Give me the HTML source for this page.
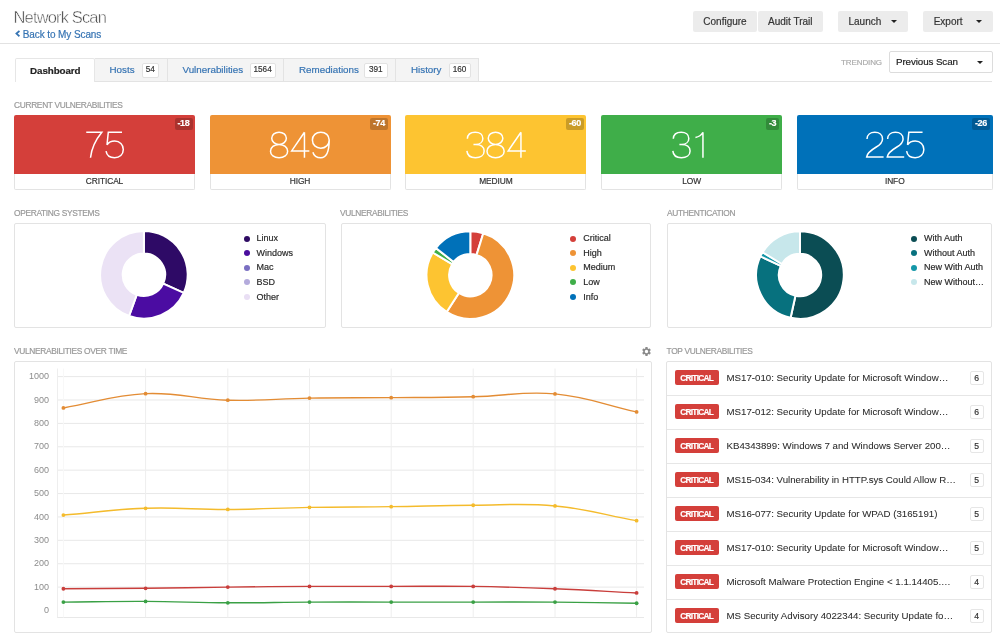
<!DOCTYPE html><html><head><meta charset="utf-8"><style>
*{box-sizing:border-box;margin:0;padding:0}
html,body{width:1000px;height:639px;overflow:hidden;background:#fff;will-change:transform;-webkit-text-stroke-width:0.18px;font-family:"Liberation Sans", sans-serif;}
.a{position:absolute;white-space:nowrap}
.btn{position:absolute;background:#ececec;color:#333;font-size:10px;line-height:22px;height:20.5px;border-radius:2px}
.caret{position:absolute;width:0;height:0;border-left:3.5px solid transparent;border-right:3.5px solid transparent;border-top:3.5px solid #222}
.tab{position:absolute;top:58px;height:23px;background:#f4f4f4;border:1px solid #e3e3e3;border-bottom:none;}
.tl{position:absolute;top:6px;font-size:9.8px;color:#3573b3;line-height:10px}
.cnt{position:absolute;top:4px;height:14.5px;background:#fff;border:1px solid #e2e2e2;border-radius:2px;font-size:8.2px;color:#333;line-height:12px;text-align:center}
.lbl{position:absolute;font-size:8.4px;color:#999;line-height:9px;white-space:nowrap;letter-spacing:-0.33px}
.card{position:absolute;top:115px;height:74.5px;border-radius:2px;background:#fff;}
.cb{position:absolute;left:0;right:0;top:58.5px;bottom:0;border:1px solid #e3e3e3;border-top:none;border-radius:0 0 2px 2px}
.cc{position:absolute;left:0;right:0;top:0;height:58.5px;border-radius:2px 2px 0 0}
.num{position:absolute;left:0;right:0;top:12px;text-align:center;color:#fff;font-size:43px;line-height:36px;letter-spacing:-2.4px;text-indent:-2.4px;font-weight:normal;-webkit-text-stroke:1.35px var(--bg)}
.dl{position:absolute;top:3px;right:2.5px;height:11.5px;font-size:9px;font-weight:bold;color:#fff;line-height:11.5px;padding:0 3px 0 2.5px;background:rgba(0,0,0,0.2);border-radius:2px;letter-spacing:-0.3px}
.cl{position:absolute;left:0;right:0;top:62px;text-align:center;font-size:8.4px;color:#333;line-height:9px;letter-spacing:-0.1px}
.panel{position:absolute;border:1px solid #e3e3e3;border-radius:2px;background:#fff}
.lg{position:absolute;font-size:9px;color:#2a2a2a;line-height:10px;white-space:nowrap}
.dot{position:absolute;width:6px;height:6px;border-radius:50%}
.row{position:absolute;left:0;right:0;height:34px;border-bottom:1px solid #e6e6e6}
.crit{position:absolute;left:7.7px;top:8.9px;width:44px;height:14.5px;background:#d43f3a;border-radius:2px;color:#fff;font-weight:bold;font-size:8.3px;letter-spacing:-0.7px;line-height:16px;text-align:center}
.rt{position:absolute;left:59.5px;top:11.4px;font-size:9.7px;color:#2a2a2a;-webkit-text-stroke-width:0.05px;line-height:10px}
.rc{position:absolute;left:303px;top:9px;width:13.5px;height:14px;border:1px solid #e6e6e6;border-radius:2px;font-size:8.6px;color:#333;line-height:12px;text-align:center}
</style></head><body>

<div class="a" style="left:13.5px;top:7px;font-size:16.5px;line-height:20px;color:#3c3c3c;letter-spacing:-0.85px;-webkit-text-stroke:0.5px #fff">Network Scan</div>
<svg class="a" style="left:0;top:0" width="30" height="45"><polyline points="18.8,31.5 16.4,33.6 18.8,35.7" fill="none" stroke="#3573b3" stroke-width="1.7" stroke-linecap="square"/></svg><div class="a" style="left:22.8px;top:28.8px;font-size:10px;line-height:11px;color:#3573b3;letter-spacing:-0.1px">Back to My Scans</div>
<div class="a" style="left:0;top:43px;width:1000px;height:1px;background:#e2e2e2"></div>
<div class="btn" style="left:693px;top:11.3px;width:64px;text-align:center">Configure</div>
<div class="btn" style="left:758px;top:11.3px;width:64.5px;text-align:center">Audit Trail</div>
<div class="btn" style="left:838px;top:11.3px;width:70px;padding-left:10.5px">Launch</div><div class="caret" style="left:891px;top:19.5px"></div>
<div class="btn" style="left:923px;top:11.3px;width:69.5px;padding-left:10.7px">Export</div><div class="caret" style="left:976px;top:19.5px"></div>
<div class="a" style="left:94px;top:81px;width:898px;height:1px;background:#e3e3e3"></div>
<div class="tab" style="left:14.5px;width:80.5px;background:#fff;height:24px;border-color:#e6e6e6;border-radius:2px 2px 0 0"><div class="tl" style="left:14.6px;color:#222;font-weight:bold;top:7px;font-size:9.8px;letter-spacing:-0.1px">Dashboard</div></div>
<div class="tab" style="left:94.5px;width:73.0px;border-left:none"><div class="tl" style="left:15px">Hosts</div><div class="cnt" style="right:7.5px;width:17.3px">54</div></div>
<div class="tab" style="left:167.5px;width:116.5px;border-left:none"><div class="tl" style="left:15px">Vulnerabilities</div><div class="cnt" style="right:7.5px;width:25.8px">1564</div></div>
<div class="tab" style="left:284.0px;width:112.0px;border-left:none"><div class="tl" style="left:15px">Remediations</div><div class="cnt" style="right:7.5px;width:23.3px">391</div></div>
<div class="tab" style="left:396.0px;width:83.0px;border-left:none"><div class="tl" style="left:15px">History</div><div class="cnt" style="right:7.5px;width:21.8px">160</div></div>
<div class="lbl" style="left:841px;top:57.5px;font-size:8px;letter-spacing:-0.1px;color:#aaa">TRENDING</div>
<div class="a" style="left:889px;top:51px;width:103.5px;height:22px;border:1px solid #dcdcdc;border-radius:2px;background:#fff"><div class="a" style="left:6px;top:4.3px;font-size:9.8px;line-height:11px;color:#222;letter-spacing:-0.1px">Previous Scan</div><div class="caret" style="left:87px;top:9px"></div></div>
<div class="lbl" style="left:14px;top:100.5px">CURRENT VULNERABILITIES</div>
<div class="card" style="left:14.0px;width:181.0px"><div class="cc" style="background:#d43f3a;--bg:#d43f3a"><div class="dl">-18</div></div><div class="cb"></div><div class="cl">CRITICAL</div></div>
<div class="card" style="left:209.5px;width:181.0px"><div class="cc" style="background:#ee9336;--bg:#ee9336"><div class="dl">-74</div></div><div class="cb"></div><div class="cl">HIGH</div></div>
<div class="card" style="left:405.3px;width:181.2px"><div class="cc" style="background:#fdc431;--bg:#fdc431"><div class="dl">-60</div></div><div class="cb"></div><div class="cl">MEDIUM</div></div>
<div class="card" style="left:601.3px;width:180.5px"><div class="cc" style="background:#3fae49;--bg:#3fae49"><div class="dl">-3</div></div><div class="cb"></div><div class="cl">LOW</div></div>
<div class="card" style="left:797.0px;width:195.5px"><div class="cc" style="background:#0071b9;--bg:#0071b9"><div class="dl">-26</div></div><div class="cb"></div><div class="cl">INFO</div></div>
<svg class="a" style="left:0;top:0" width="1000" height="639"><g fill="none" stroke="#fff" stroke-width="1.5" stroke-linecap="butt" stroke-linejoin="miter"><path transform="translate(85.60 131.60)" d="M0.65,0.65 H16.2 C11.2,6.8 6.0,15.5 4.9,26.15"/><path transform="translate(105.40 131.60)" d="M16.6,0.65 H2.9 L1.6,13.3 C3.2,10.9 5.9,9.5 9.3,9.5 C14.4,9.5 17.9,13 17.9,17.9 C17.9,22.8 14.2,26.15 9.2,26.15 C4.6,26.15 1.3,23.5 0.65,19.6"/><path transform="translate(269.85 131.60)" d="M9.2,0.65 C13.3,0.65 16.5,3.2 16.5,6.6 C16.5,10 13.3,12.9 9.2,12.9 C5.1,12.9 1.9,10 1.9,6.6 C1.9,3.2 5.1,0.65 9.2,0.65 Z M9.2,12.9 C14.2,12.9 17.8,15.7 17.8,19.6 C17.8,23.5 14.2,26.15 9.2,26.15 C4.2,26.15 0.65,23.5 0.65,19.6 C0.65,15.7 4.2,12.9 9.2,12.9 Z"/><path transform="translate(291.05 131.60)" d="M13.4,0.65 L0.65,19.3 H18.3 M13.4,0.65 V26.15"/><path transform="translate(311.60 131.60)" d="M17.6,8.4 C17.6,13.2 14,16.6 9.2,16.6 C4.4,16.6 0.8,13.2 0.8,8.5 C0.8,3.8 4.4,0.65 9.2,0.65 C14,0.65 17.6,3.8 17.6,8.4 C17.6,19.5 14.8,26.15 9.2,26.15 C5.2,26.15 2.2,24 1.3,20.6"/><path transform="translate(466.25 131.60)" d="M1.1,7.2 C1.3,3 4.6,0.65 9,0.65 C13.4,0.65 16.6,3.1 16.6,6.8 C16.6,10.5 13.6,12.8 9.4,12.8 H7.2 M9.4,12.8 C14.4,12.8 17.9,15.4 17.9,19.5 C17.9,23.6 14.2,26.15 9.2,26.15 C4.4,26.15 1,23.6 0.65,19.3"/><path transform="translate(486.35 131.60)" d="M9.2,0.65 C13.3,0.65 16.5,3.2 16.5,6.6 C16.5,10 13.3,12.9 9.2,12.9 C5.1,12.9 1.9,10 1.9,6.6 C1.9,3.2 5.1,0.65 9.2,0.65 Z M9.2,12.9 C14.2,12.9 17.8,15.7 17.8,19.6 C17.8,23.5 14.2,26.15 9.2,26.15 C4.2,26.15 0.65,23.5 0.65,19.6 C0.65,15.7 4.2,12.9 9.2,12.9 Z"/><path transform="translate(507.55 131.60)" d="M13.4,0.65 L0.65,19.3 H18.3 M13.4,0.65 V26.15"/><path transform="translate(672.20 131.60)" d="M1.1,7.2 C1.3,3 4.6,0.65 9,0.65 C13.4,0.65 16.6,3.1 16.6,6.8 C16.6,10.5 13.6,12.8 9.4,12.8 H7.2 M9.4,12.8 C14.4,12.8 17.9,15.4 17.9,19.5 C17.9,23.6 14.2,26.15 9.2,26.15 C4.4,26.15 1,23.6 0.65,19.3"/><path transform="translate(691.55 131.60)" d="M11.4,0.65 V26.15 M11.4,0.65 C9.8,3.6 7,5.3 3.9,5.8"/><path transform="translate(865.70 131.60)" d="M1.3,7.3 C1.4,3 4.7,0.65 9.1,0.65 C13.6,0.65 16.8,3.3 16.8,7.3 C16.8,10.9 14.5,13 10.6,15.4 C4.9,18.8 1.2,21.4 0.9,25.5 H17.9"/><path transform="translate(886.30 131.60)" d="M1.3,7.3 C1.4,3 4.7,0.65 9.1,0.65 C13.6,0.65 16.8,3.3 16.8,7.3 C16.8,10.9 14.5,13 10.6,15.4 C4.9,18.8 1.2,21.4 0.9,25.5 H17.9"/><path transform="translate(905.95 131.60)" d="M16.6,0.65 H2.9 L1.6,13.3 C3.2,10.9 5.9,9.5 9.3,9.5 C14.4,9.5 17.9,13 17.9,17.9 C17.9,22.8 14.2,26.15 9.2,26.15 C4.6,26.15 1.3,23.5 0.65,19.6"/></g></svg>
<div class="lbl" style="left:14px;top:209px">OPERATING SYSTEMS</div>
<div class="lbl" style="left:340px;top:209px">VULNERABILITIES</div>
<div class="lbl" style="left:667px;top:209px">AUTHENTICATION</div>
<div class="panel" style="left:14.0px;top:223px;width:311.5px;height:105px"></div>
<div class="panel" style="left:340.5px;top:223px;width:310.5px;height:105px"></div>
<div class="panel" style="left:666.5px;top:223px;width:325.8px;height:105px"></div>
<svg class="a" style="left:0;top:0" width="1000" height="639" viewBox="0 0 1000 639"><path d="M143.90 231.00 A43.80 43.80 0 0 1 183.76 292.96 L163.19 283.59 A21.20 21.20 0 0 0 143.90 253.60 Z" fill="#2e0a66" stroke="#fff" stroke-width="2"/><path d="M183.76 292.96 A43.80 43.80 0 0 1 129.06 316.01 L136.72 294.75 A21.20 21.20 0 0 0 163.19 283.59 Z" fill="#4b0ca2" stroke="#fff" stroke-width="2"/><path d="M129.06 316.01 A43.80 43.80 0 0 1 143.90 231.00 L143.90 253.60 A21.20 21.20 0 0 0 136.72 294.75 Z" fill="#ebe2f5" stroke="#fff" stroke-width="2"/><path d="M470.30 231.30 A43.80 43.80 0 0 1 483.30 233.27 L476.59 254.86 A21.20 21.20 0 0 0 470.30 253.90 Z" fill="#d43f3a" stroke="#fff" stroke-width="2"/><path d="M483.30 233.27 A43.80 43.80 0 1 1 446.65 311.96 L458.85 292.94 A21.20 21.20 0 1 0 476.59 254.86 Z" fill="#ee9336" stroke="#fff" stroke-width="2"/><path d="M446.65 311.96 A43.80 43.80 0 0 1 432.79 252.49 L452.14 264.16 A21.20 21.20 0 0 0 458.85 292.94 Z" fill="#fdc431" stroke="#fff" stroke-width="2"/><path d="M432.79 252.49 A43.80 43.80 0 0 1 435.88 248.01 L453.64 261.99 A21.20 21.20 0 0 0 452.14 264.16 Z" fill="#3fae49" stroke="#fff" stroke-width="2"/><path d="M435.88 248.01 A43.80 43.80 0 0 1 470.30 231.30 L470.30 253.90 A21.20 21.20 0 0 0 453.64 261.99 Z" fill="#0071b9" stroke="#fff" stroke-width="2"/><path d="M800.00 231.20 A43.80 43.80 0 1 1 790.59 317.78 L795.45 295.71 A21.20 21.20 0 1 0 800.00 253.80 Z" fill="#0b4d54" stroke="#fff" stroke-width="2"/><path d="M790.59 317.78 A43.80 43.80 0 0 1 760.40 256.28 L780.83 265.94 A21.20 21.20 0 0 0 795.45 295.71 Z" fill="#07717e" stroke="#fff" stroke-width="2"/><path d="M760.40 256.28 A43.80 43.80 0 0 1 762.57 252.25 L781.89 263.99 A21.20 21.20 0 0 0 780.83 265.94 Z" fill="#1497a8" stroke="#fff" stroke-width="2"/><path d="M762.57 252.25 A43.80 43.80 0 0 1 800.00 231.20 L800.00 253.80 A21.20 21.20 0 0 0 781.89 263.99 Z" fill="#c7e7eb" stroke="#fff" stroke-width="2"/></svg>
<div class="dot" style="left:243.7px;top:235.5px;background:#2e0b63"></div>
<div class="lg" style="left:256.6px;top:233.2px">Linux</div>
<div class="dot" style="left:243.7px;top:250.1px;background:#4a0e9e"></div>
<div class="lg" style="left:256.6px;top:247.8px">Windows</div>
<div class="dot" style="left:243.7px;top:264.7px;background:#7a6fc2"></div>
<div class="lg" style="left:256.6px;top:262.4px">Mac</div>
<div class="dot" style="left:243.7px;top:279.3px;background:#b4abdc"></div>
<div class="lg" style="left:256.6px;top:277.0px">BSD</div>
<div class="dot" style="left:243.7px;top:293.9px;background:#e9dff4"></div>
<div class="lg" style="left:256.6px;top:291.6px">Other</div>
<div class="dot" style="left:569.5px;top:235.5px;background:#d43f3a"></div>
<div class="lg" style="left:583.2px;top:233.2px">Critical</div>
<div class="dot" style="left:569.5px;top:250.1px;background:#ee9336"></div>
<div class="lg" style="left:583.2px;top:247.8px">High</div>
<div class="dot" style="left:569.5px;top:264.7px;background:#fdc431"></div>
<div class="lg" style="left:583.2px;top:262.4px">Medium</div>
<div class="dot" style="left:569.5px;top:279.3px;background:#3fae49"></div>
<div class="lg" style="left:583.2px;top:277.0px">Low</div>
<div class="dot" style="left:569.5px;top:293.9px;background:#0071b9"></div>
<div class="lg" style="left:583.2px;top:291.6px">Info</div>
<div class="dot" style="left:910.6px;top:235.5px;background:#0b4d54"></div>
<div class="lg" style="left:924.1px;top:233.2px">With Auth</div>
<div class="dot" style="left:910.6px;top:250.1px;background:#07717e"></div>
<div class="lg" style="left:924.1px;top:247.8px">Without Auth</div>
<div class="dot" style="left:910.6px;top:264.7px;background:#1497a8"></div>
<div class="lg" style="left:924.1px;top:262.4px">New With Auth</div>
<div class="dot" style="left:910.6px;top:279.3px;background:#c7e7eb"></div>
<div class="lg" style="left:924.1px;top:277.0px">New Without…</div>
<div class="lbl" style="left:14px;top:347px">VULNERABILITIES OVER TIME</div>
<div class="panel" style="left:14px;top:361px;width:637.5px;height:271.5px"></div>
<svg class="a" style="left:640.5px;top:345.5px" width="11" height="11" viewBox="0 0 24 24"><path fill="#8a8a8a" d="M19.14 12.94c.04-.3.06-.61.06-.94 0-.32-.02-.64-.07-.94l2.03-1.58a.49.49 0 0 0 .12-.61l-1.92-3.32a.49.49 0 0 0-.59-.22l-2.39.96c-.5-.38-1.03-.7-1.62-.94l-.36-2.54a.484.484 0 0 0-.48-.41h-3.84c-.24 0-.43.17-.47.41l-.36 2.54c-.59.24-1.13.57-1.62.94l-2.39-.96a.48.48 0 0 0-.59.22L2.74 8.87c-.12.21-.08.47.12.61l2.03 1.58c-.05.3-.09.63-.09.94s.02.64.07.94l-2.03 1.58a.49.49 0 0 0-.12.61l1.92 3.32c.12.22.37.29.59.22l2.39-.96c.5.38 1.03.7 1.62.94l.36 2.54c.05.24.24.41.48.41h3.84c.24 0 .44-.17.47-.41l.36-2.54c.59-.24 1.13-.56 1.62-.94l2.39.96c.22.08.47 0 .59-.22l1.92-3.32c.12-.22.07-.47-.12-.61l-2.01-1.58zM12 15.6c-1.98 0-3.6-1.62-3.6-3.6s1.62-3.6 3.6-3.6 3.6 1.62 3.6 3.6-1.62 3.6-3.6 3.6z"/></svg>
<svg class="a" style="left:0;top:0" width="1000" height="639" viewBox="0 0 1000 639"><text x="49" y="613.10" font-size="9" fill="#8c8c8c" text-anchor="end" font-family='"Liberation Sans",sans-serif'>0</text><line x1="57" y1="587.11" x2="644" y2="587.11" stroke="#e8e8e8" stroke-width="1"/><text x="49" y="589.71" font-size="9" fill="#8c8c8c" text-anchor="end" font-family='"Liberation Sans",sans-serif'>100</text><line x1="57" y1="563.72" x2="644" y2="563.72" stroke="#e8e8e8" stroke-width="1"/><text x="49" y="566.32" font-size="9" fill="#8c8c8c" text-anchor="end" font-family='"Liberation Sans",sans-serif'>200</text><line x1="57" y1="540.33" x2="644" y2="540.33" stroke="#e8e8e8" stroke-width="1"/><text x="49" y="542.93" font-size="9" fill="#8c8c8c" text-anchor="end" font-family='"Liberation Sans",sans-serif'>300</text><line x1="57" y1="516.94" x2="644" y2="516.94" stroke="#e8e8e8" stroke-width="1"/><text x="49" y="519.54" font-size="9" fill="#8c8c8c" text-anchor="end" font-family='"Liberation Sans",sans-serif'>400</text><line x1="57" y1="493.55" x2="644" y2="493.55" stroke="#e8e8e8" stroke-width="1"/><text x="49" y="496.15" font-size="9" fill="#8c8c8c" text-anchor="end" font-family='"Liberation Sans",sans-serif'>500</text><line x1="57" y1="470.16" x2="644" y2="470.16" stroke="#e8e8e8" stroke-width="1"/><text x="49" y="472.76" font-size="9" fill="#8c8c8c" text-anchor="end" font-family='"Liberation Sans",sans-serif'>600</text><line x1="57" y1="446.77" x2="644" y2="446.77" stroke="#e8e8e8" stroke-width="1"/><text x="49" y="449.37" font-size="9" fill="#8c8c8c" text-anchor="end" font-family='"Liberation Sans",sans-serif'>700</text><line x1="57" y1="423.38" x2="644" y2="423.38" stroke="#e8e8e8" stroke-width="1"/><text x="49" y="425.98" font-size="9" fill="#8c8c8c" text-anchor="end" font-family='"Liberation Sans",sans-serif'>800</text><line x1="57" y1="399.99" x2="644" y2="399.99" stroke="#e8e8e8" stroke-width="1"/><text x="49" y="402.59" font-size="9" fill="#8c8c8c" text-anchor="end" font-family='"Liberation Sans",sans-serif'>900</text><line x1="57" y1="376.60" x2="644" y2="376.60" stroke="#e8e8e8" stroke-width="1"/><text x="49" y="379.20" font-size="9" fill="#8c8c8c" text-anchor="end" font-family='"Liberation Sans",sans-serif'>1000</text><line x1="57" y1="617.5" x2="644" y2="617.5" stroke="#e8e8e8" stroke-width="1"/><line x1="57.50" y1="368.5" x2="57.50" y2="617.5" stroke="#eeeeee" stroke-width="1"/><line x1="63.40" y1="368.5" x2="63.40" y2="617.5" stroke="#f8f8f8" stroke-width="1"/><line x1="145.60" y1="368.5" x2="145.60" y2="617.5" stroke="#eeeeee" stroke-width="1"/><line x1="227.80" y1="368.5" x2="227.80" y2="617.5" stroke="#eeeeee" stroke-width="1"/><line x1="309.50" y1="368.5" x2="309.50" y2="617.5" stroke="#eeeeee" stroke-width="1"/><line x1="391.20" y1="368.5" x2="391.20" y2="617.5" stroke="#eeeeee" stroke-width="1"/><line x1="473.20" y1="368.5" x2="473.20" y2="617.5" stroke="#eeeeee" stroke-width="1"/><line x1="555.00" y1="368.5" x2="555.00" y2="617.5" stroke="#eeeeee" stroke-width="1"/><line x1="636.60" y1="368.5" x2="636.60" y2="617.5" stroke="#eeeeee" stroke-width="1"/><path d="M63.40 407.94 C96.28 402.24 112.53 395.23 145.60 393.67 C178.29 392.14 194.87 399.33 227.80 400.22 C260.43 401.11 276.81 398.63 309.50 398.12 C342.17 397.60 358.52 397.93 391.20 397.65 C424.00 397.37 440.41 397.46 473.20 396.72 C505.93 395.97 522.66 390.90 555.00 393.91 C588.02 396.98 603.96 404.71 636.60 411.92" fill="none" stroke="#e38c34" stroke-width="1.4"/><circle cx="63.40" cy="407.94" r="1.9" fill="#e38c34"/><circle cx="145.60" cy="393.67" r="1.9" fill="#e38c34"/><circle cx="227.80" cy="400.22" r="1.9" fill="#e38c34"/><circle cx="309.50" cy="398.12" r="1.9" fill="#e38c34"/><circle cx="391.20" cy="397.65" r="1.9" fill="#e38c34"/><circle cx="473.20" cy="396.72" r="1.9" fill="#e38c34"/><circle cx="555.00" cy="393.91" r="1.9" fill="#e38c34"/><circle cx="636.60" cy="411.92" r="1.9" fill="#e38c34"/><path d="M63.40 515.07 C96.28 512.36 112.67 509.41 145.60 508.29 C178.43 507.16 194.92 509.64 227.80 509.46 C260.48 509.27 276.82 507.91 309.50 507.35 C342.18 506.79 358.52 507.07 391.20 506.65 C424.00 506.23 440.40 505.39 473.20 505.25 C505.92 505.10 522.54 502.88 555.00 505.95 C587.90 509.06 603.96 514.79 636.60 520.68" fill="none" stroke="#f4bb2c" stroke-width="1.4"/><circle cx="63.40" cy="515.07" r="1.9" fill="#f4bb2c"/><circle cx="145.60" cy="508.29" r="1.9" fill="#f4bb2c"/><circle cx="227.80" cy="509.46" r="1.9" fill="#f4bb2c"/><circle cx="309.50" cy="507.35" r="1.9" fill="#f4bb2c"/><circle cx="391.20" cy="506.65" r="1.9" fill="#f4bb2c"/><circle cx="473.20" cy="505.25" r="1.9" fill="#f4bb2c"/><circle cx="555.00" cy="505.95" r="1.9" fill="#f4bb2c"/><circle cx="636.60" cy="520.68" r="1.9" fill="#f4bb2c"/><path d="M63.40 588.75 C96.28 588.56 112.72 588.61 145.60 588.28 C178.48 587.95 194.92 587.49 227.80 587.11 C260.48 586.74 276.82 586.55 309.50 586.41 C342.18 586.27 358.52 586.41 391.20 586.41 C424.00 586.41 440.41 585.94 473.20 586.41 C505.93 586.88 522.30 587.44 555.00 588.75 C587.66 590.06 603.96 591.27 636.60 592.96" fill="none" stroke="#c93e3b" stroke-width="1.4"/><circle cx="63.40" cy="588.75" r="1.9" fill="#c93e3b"/><circle cx="145.60" cy="588.28" r="1.9" fill="#c93e3b"/><circle cx="227.80" cy="587.11" r="1.9" fill="#c93e3b"/><circle cx="309.50" cy="586.41" r="1.9" fill="#c93e3b"/><circle cx="391.20" cy="586.41" r="1.9" fill="#c93e3b"/><circle cx="473.20" cy="586.41" r="1.9" fill="#c93e3b"/><circle cx="555.00" cy="588.75" r="1.9" fill="#c93e3b"/><circle cx="636.60" cy="592.96" r="1.9" fill="#c93e3b"/><path d="M63.40 602.08 C96.28 601.80 112.72 601.24 145.60 601.38 C178.48 601.52 194.92 602.64 227.80 602.78 C260.48 602.92 276.82 602.22 309.50 602.08 C342.18 601.94 358.52 602.08 391.20 602.08 C424.00 602.08 440.40 602.08 473.20 602.08 C505.92 602.08 522.28 601.85 555.00 602.08 C587.64 602.31 603.96 602.78 636.60 603.25" fill="none" stroke="#3aa045" stroke-width="1.4"/><circle cx="63.40" cy="602.08" r="1.9" fill="#3aa045"/><circle cx="145.60" cy="601.38" r="1.9" fill="#3aa045"/><circle cx="227.80" cy="602.78" r="1.9" fill="#3aa045"/><circle cx="309.50" cy="602.08" r="1.9" fill="#3aa045"/><circle cx="391.20" cy="602.08" r="1.9" fill="#3aa045"/><circle cx="473.20" cy="602.08" r="1.9" fill="#3aa045"/><circle cx="555.00" cy="602.08" r="1.9" fill="#3aa045"/><circle cx="636.60" cy="603.25" r="1.9" fill="#3aa045"/></svg>
<div class="lbl" style="left:666.5px;top:346.5px">TOP VULNERABILITIES</div>
<div class="panel" style="left:666px;top:360.5px;width:326px;height:272px;overflow:hidden">
<div class="row" style="top:0.0px"><div class="crit">CRITICAL</div><div class="rt">MS17-010: Security Update for Microsoft Window…</div><div class="rc">6</div></div>
<div class="row" style="top:34.0px"><div class="crit">CRITICAL</div><div class="rt">MS17-012: Security Update for Microsoft Window…</div><div class="rc">6</div></div>
<div class="row" style="top:68.0px"><div class="crit">CRITICAL</div><div class="rt">KB4343899: Windows 7 and Windows Server 200…</div><div class="rc">5</div></div>
<div class="row" style="top:102.0px"><div class="crit">CRITICAL</div><div class="rt">MS15-034: Vulnerability in HTTP.sys Could Allow R…</div><div class="rc">5</div></div>
<div class="row" style="top:136.0px"><div class="crit">CRITICAL</div><div class="rt">MS16-077: Security Update for WPAD (3165191)</div><div class="rc">5</div></div>
<div class="row" style="top:170.0px"><div class="crit">CRITICAL</div><div class="rt">MS17-010: Security Update for Microsoft Window…</div><div class="rc">5</div></div>
<div class="row" style="top:204.0px"><div class="crit">CRITICAL</div><div class="rt">Microsoft Malware Protection Engine &lt; 1.1.14405.…</div><div class="rc">4</div></div>
<div class="row" style="top:238.0px"><div class="crit">CRITICAL</div><div class="rt">MS Security Advisory 4022344: Security Update fo…</div><div class="rc">4</div></div>
</div>
</body></html>
